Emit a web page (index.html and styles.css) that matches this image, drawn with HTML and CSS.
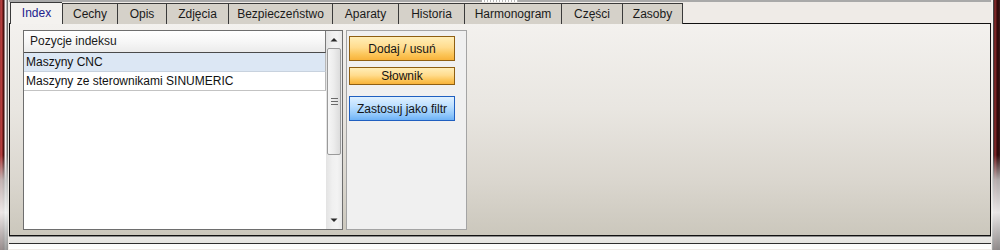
FILE: index.html
```html
<!DOCTYPE html>
<html lang="pl">
<head>
<meta charset="utf-8">
<title>Index</title>
<link rel="stylesheet" href="styles.css">
</head>
<body>
<div class="window">
  <div class="frame frame-left"></div>
  <div class="main">
    <div class="topbar"><span class="gripper"></span></div>
    <div class="tabs">
      <div class="tab active t-index">Index</div>
      <div class="tab t-cechy">Cechy</div>
      <div class="tab t-opis">Opis</div>
      <div class="tab t-zdjecia">Zdjęcia</div>
      <div class="tab t-bezp">Bezpieczeństwo</div>
      <div class="tab t-aparaty">Aparaty</div>
      <div class="tab t-historia">Historia</div>
      <div class="tab t-harm">Harmonogram</div>
      <div class="tab t-czesci">Części</div>
      <div class="tab t-zasoby last">Zasoby</div>
    </div>
    <div class="panel">
      <div class="listbox">
        <div class="list-col">
          <div class="list-header">Pozycje indeksu</div>
          <div class="row selected">Maszyny CNC</div>
          <div class="row">Maszyny ze sterownikami SINUMERIC</div>
        </div>
        <div class="scrollbar">
          <div class="arrow arrow-up">
            <svg width="8" height="5" viewBox="0 0 8 5"><path d="M0.5 4.5 L4 1 L7.5 4.5 Z" fill="#2a2a2a"/></svg>
          </div>
          <div class="thumb">
            <span class="grip"></span>
          </div>
          <div class="track"></div>
          <div class="arrow arrow-down">
            <svg width="8" height="5" viewBox="0 0 8 5"><path d="M0.5 0.5 L7.5 0.5 L4 4 Z" fill="#2a2a2a"/></svg>
          </div>
        </div>
      </div>
      <div class="actions">
        <button class="btn btn-orange btn-tall">Dodaj / usuń</button>
        <button class="btn btn-orange btn-short">Słownik</button>
        <button class="btn btn-blue btn-tall">Zastosuj jako filtr</button>
      </div>
    </div>
    <div class="bottom"></div>
  </div>
  <div class="frame frame-right"></div>
</div>
</body>
</html>
```

FILE: styles.css
```css
* { box-sizing: border-box; }

html, body {
  margin: 0;
  padding: 0;
  width: 1000px;
  height: 250px;
  overflow: hidden;
  background: #efebe7;
}

body {
  font-family: "Liberation Sans", Arial, sans-serif;
  font-size: 12px;
  color: #111;
}

.window {
  display: flex;
  width: 1000px;
  height: 250px;
}

.frame {
  width: 8px;
  height: 250px;
  flex: none;
}

.frame-left {
  background:
    linear-gradient(to bottom, rgba(235,235,235,0) 0, rgba(235,235,235,0) 62%, rgba(200,200,200,0.85) 72%, rgba(240,240,240,0.95) 85%, rgba(150,150,150,0.9) 100%),
    linear-gradient(to right, #8e2b2b 0, #c24a4a 1px, #a83434 2px, #5c1616 3px, #3a0b0b 4px, #f2eaea 5px, #ffffff 6px, #6a6a6a 7px, #6a6a6a 8px);
}

.frame-right {
  background:
    linear-gradient(to bottom, rgba(235,235,235,0) 0, rgba(235,235,235,0) 62%, rgba(200,200,200,0.85) 72%, rgba(240,240,240,0.95) 85%, rgba(150,150,150,0.9) 100%),
    linear-gradient(to right, #f3f1ee 0, #f3f1ee 1px, #444 1px, #444 2px, #4a1515 2px, #8a2e2e 3px, #6a1e1e 4px, #3a0a0a 5px, #2a0808 6px, #3d1a1a 8px);
}

.main {
  flex: 1;
  display: flex;
  flex-direction: column;
  height: 250px;
  padding: 0 1px;
}

.topbar {
  height: 3px;
  flex: none;
  border-top: 2px solid #a9a9a9;
  background: #efebe7;
  display: flex;
  justify-content: center;
}

.gripper {
  width: 36px;
  height: 2px;
  margin-top: -2px;
  background: repeating-linear-gradient(to right, #ffffff 0, #ffffff 2px, #b8b8b8 2px, #b8b8b8 3px);
}

.tabs {
  height: 21px;
  flex: none;
  display: flex;
  align-items: flex-end;
  padding-left: 1px;
  margin-bottom: -1px;
  position: relative;
  z-index: 1;
}

.tab {
  height: 21px;
  line-height: 20px;
  text-align: center;
  white-space: nowrap;
  background: #d5d1c9;
  border-top: 1px solid #3a3a3a;
  border-left: 1px solid #3a3a3a;
  color: #1a1a1a;
  font-size: 12px;
}

.tab.last { border-right: 1px solid #3a3a3a; }

.tab.active {
  height: 22px;
  line-height: 21px;
  background: #f4f2ef;
  color: #22228e;
}

.t-index { width: 52px; }
.t-cechy { width: 55px; }
.t-opis { width: 49px; }
.t-zdjecia { width: 62px; }
.t-bezp { width: 104px; }
.t-aparaty { width: 66px; }
.t-historia { width: 66px; }
.t-harm { width: 97px; }
.t-czesci { width: 61px; }
.t-zasoby { width: 61px; }

.panel {
  height: 213px;
  flex: none;
  border: 1px solid #111;
  background: linear-gradient(to bottom, #f3f1ee 0, #e9e6e1 40%, #dad6ce 75%, #cbc7bc 100%);
  padding: 6px 0 0 13px;
  display: flex;
  align-items: flex-start;
  gap: 3px;
}

.listbox {
  width: 320px;
  height: 200px;
  border: 1px solid #6e6e6e;
  background: #ffffff;
  display: flex;
}

.list-col {
  width: 302px;
  display: flex;
  flex-direction: column;
}

.list-header {
  height: 22px;
  line-height: 21px;
  padding-left: 6px;
  border-bottom: 1px solid #4a4a4a;
  border-right: 1px solid #7a7a7a;
  background: linear-gradient(to bottom, #ffffff 0, #f7f7f7 50%, #ebebeb 100%);
  color: #1a1a1a;
}

.row {
  height: 19px;
  line-height: 18px;
  padding-left: 2px;
  border-bottom: 1px solid #c3c3c3;
  border-right: 1px solid #b8b8b8;
  color: #111;
  white-space: nowrap;
}

.row.selected {
  background: #dce7f4;
  border-bottom-color: #c8d2de;
}

.scrollbar {
  width: 16px;
  display: flex;
  flex-direction: column;
  align-items: center;
  background: linear-gradient(to right, #e3e3e3 0, #f0f0f0 40%, #f3f3f3 70%, #e8e8e8 100%);
}

.arrow {
  width: 16px;
  height: 17px;
  display: flex;
  align-items: center;
  justify-content: center;
  flex: none;
}

.thumb {
  width: 14px;
  height: 107px;
  flex: none;
  border: 1px solid #9a9a9a;
  border-radius: 2px;
  background: linear-gradient(to right, #f6f6f6 0, #ececec 50%, #dcdcdc 100%);
  display: flex;
  align-items: center;
  justify-content: center;
}

.grip {
  width: 7px;
  height: 7px;
  margin-top: 0;
  background: repeating-linear-gradient(to bottom, #6a6a6a 0, #6a6a6a 1px, transparent 1px, transparent 3px);
}

.track { flex: 1; }

.actions {
  width: 121px;
  height: 200px;
  border: 1px solid #a4a4a4;
  background: #f0f0f0;
  padding: 5px 0 0 2px;
  display: flex;
  flex-direction: column;
  align-items: flex-start;
}

.btn {
  width: 106px;
  margin: 0;
  padding: 0;
  font-family: "Liberation Sans", Arial, sans-serif;
  font-size: 12px;
  color: #141414;
  text-align: center;
  white-space: nowrap;
  cursor: default;
}

.btn-tall { height: 25px; }
.btn-short { height: 18px; line-height: 16px; margin-top: 6px; }
.btn-blue { margin-top: 11px; }

.btn-orange {
  border: 1px solid #8f5f12;
  background: linear-gradient(to bottom, #ffeeb8 0, #ffdc8e 45%, #fcc65a 75%, #f8b33a 100%);
}

.btn-blue {
  border: 1px solid #1f5fc0;
  background: linear-gradient(to bottom, #dff0ff 0, #bcdfff 40%, #93c9fb 75%, #6eb2f6 100%);
}

.bottom {
  height: 13px;
  flex: none;
  background: linear-gradient(to bottom, #8a8a8a 0, #8a8a8a 1px, #e9e8e5 1px, #e4e3e0 7px, #2e2e2e 7px, #2e2e2e 8px, #fbfbfb 8px, #ffffff 100%);
}
```
